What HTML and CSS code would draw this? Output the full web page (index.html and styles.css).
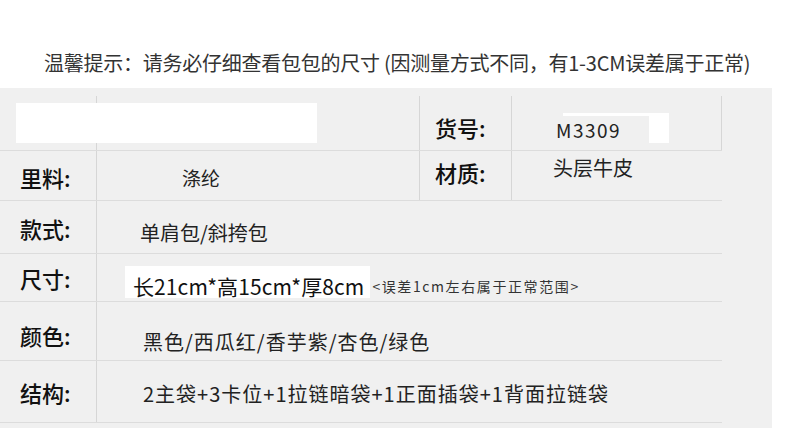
FILE: index.html
```html
<!DOCTYPE html>
<html lang="zh-CN">

<head>
    <meta charset="UTF-8">
    <meta name="viewport" content="width=device-width, initial-scale=1.0">
    <title>尺寸信息</title>
    <link rel="stylesheet" href="styles.css">
</head>

<body>
    <!-- 提示 -->
    <div class="notice">温馨提示：请务必仔细查看包包的尺寸 (因测量方式不同，有1-3CM误差属于正常)</div>

    <div class="panel">
        <div class="row row-1 four">
            <div class="cell"></div>
            <div class="cell"></div>
            <div class="cell label label-r">货号:</div>
            <div class="cell">
                <span class="code-box"><span class="code">M3309</span></span>
            </div>
            <div class="mask"></div>
        </div>

        <div class="row row-2 four">
            <div class="cell label">里料:</div>
            <div class="cell value lining">涤纶</div>
            <div class="cell label label-r material">材质:</div>
            <div class="cell value leather">头层牛皮</div>
        </div>

        <div class="row row-3">
            <div class="cell label">款式:</div>
            <div class="cell value style">单肩包/斜挎包</div>
        </div>

        <div class="row row-4">
            <div class="cell label">尺寸:</div>
            <div class="cell value size">
                <span class="size-box">长21cm*高15cm*厚8cm</span>
                <span class="size-note">&lt;误差1cm左右属于正常范围&gt;</span>
            </div>
        </div>

        <div class="row row-5">
            <div class="cell label">颜色:</div>
            <div class="cell value colors">黑色/西瓜红/香芋紫/杏色/绿色</div>
        </div>

        <div class="row row-6">
            <div class="cell label">结构:</div>
            <div class="cell value colors">2主袋+3卡位+1拉链暗袋+1正面插袋+1背面拉链袋</div>
        </div>
    </div>
</body>

</html>
```

FILE: styles.css
```css
body {
    margin: 0;
    background: #ffffff;
    font-family: "Noto Sans CJK SC", "Noto Sans", sans-serif;
    color: #1a1a1a;
}

.notice {
    height: 88px;
    box-sizing: border-box;
    padding: 50px 0 0 44px;
    font-size: 20px;
    line-height: 26px;
    color: #333;
    white-space: nowrap;
    letter-spacing: -0.25px;
}

.panel {
    width: 772px;
    height: 340px;
    box-sizing: border-box;
    padding-top: 8px;
    background-color: #f0f0f0;
}

.row {
    position: relative;
    display: grid;
    grid-template-columns: 97px 1fr;
    width: 722px;
    box-sizing: border-box;
    border-bottom: 1px solid #dcdcdc;
}

.row.four {
    grid-template-columns: 97px 323px 92px 1fr;
}

.row-1 { height: 55px; }
.row-2 { height: 50px; }
.row-3 { height: 53px; }
.row-4 { height: 48px; }
.row-5 { height: 59px; }
.row-6 { height: 62px; }

.cell {
    display: flex;
    align-items: center;
    box-sizing: border-box;
    min-width: 0;
}

.cell:not(:last-of-type) {
    border-right: 1px solid #d6d6d6;
}

.row:not(.four) .cell:first-child {
    border-right: 1px solid #d6d6d6;
}

.label {
    padding-left: 20px;
    font-size: 22px;
    font-weight: 500;
    color: #111;
    line-height: 26px;
}

.label-r {
    padding-left: 15px;
}

.row-1 .label { padding-top: 7px; }
.row-2 .label { padding-top: 3px; }
.row-2 .material { align-items: flex-start; padding-top: 8px; }
.row-3 .label { padding-top: 1px; }
.row-4 .label { padding-top: 1px; }
.row-5 .label { padding-top: 7px; }
.row-6 .label { padding-top: 1px; }

.value {
    font-size: 20px;
    line-height: 26px;
    color: #222;
}

.lining {
    padding-left: 85px;
    padding-top: 4px;
    font-size: 19px;
}

.leather {
    align-items: flex-start;
    padding-left: 41px;
    padding-top: 4px;
}

.style {
    padding-left: 43px;
    padding-top: 11px;
}

.colors {
    padding-left: 46px;
    padding-top: 5px;
    letter-spacing: 1px;
}

.row-5 .colors { padding-top: 21px; }

.size {
    align-items: flex-end;
    padding-bottom: 3px;
}

.size-box {
    margin-left: 28px;
    padding: 9px 6px 0 8px;
    background: #ffffff;
    color: #111;
    font-size: 21px;
    line-height: 23px;
    letter-spacing: 0.1px;
    white-space: nowrap;
}

.size-note {
    margin-left: 2px;
    margin-bottom: 2px;
    font-size: 14px;
    line-height: 20px;
    letter-spacing: 1.6px;
    color: #333;
    white-space: nowrap;
}

.code-box {
    display: block;
    margin: 9px 0 0 51px;
    padding: 3px 20px 0 0;
    background: #ffffff;
}

.code {
    display: block;
    width: 93px;
    height: 27px;
    margin-left: -7px;
    background: #f0f0f0;
    font-size: 19px;
    line-height: 27px;
    letter-spacing: 1.5px;
    color: #222;
}

/* 遮挡块 */
.mask {
    position: absolute;
    left: 16px;
    top: 7px;
    width: 301px;
    height: 40px;
    background: #ffffff;
}
```
